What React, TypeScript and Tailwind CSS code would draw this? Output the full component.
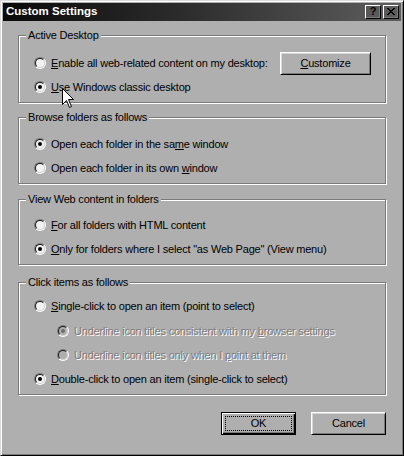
import type { FC, ReactNode } from 'react';

const BG = 'bg-[#afafaf]';

const Radio: FC<{ checked?: boolean; disabled?: boolean }> = ({ checked, disabled }) => (
  <div className="w-3 h-3 shrink-0 rounded-full border border-t-[#7a7a7a] border-l-[#7a7a7a] border-r-white border-b-white">
    <div
      className={`w-full h-full rounded-full border border-t-[#1a1a1a] border-l-[#1a1a1a] border-r-[#d8d8d8] border-b-[#d8d8d8] flex items-center justify-center ${
        disabled ? 'bg-[#afafaf]' : 'bg-[#f2f2f2]'
      }`}
    >
      {checked && <div className={`w-1 h-1 rounded-full ${disabled ? 'bg-[#6e6e6e]' : 'bg-black'}`} />}
    </div>
  </div>
);

const Key: FC<{ children: ReactNode }> = ({ children }) => (
  <span className="underline underline-offset-[1px] decoration-1">{children}</span>
);

const Option: FC<{ checked?: boolean; disabled?: boolean; children: ReactNode; className?: string }> = ({
  checked,
  disabled,
  children,
  className = 'h-6',
}) => (
  <div className={`flex items-center gap-[5px] ${className}`}>
    <Radio checked={checked} disabled={disabled} />
    <span
      className={
        disabled ? 'text-[#7c7c7c] [text-shadow:1px_1px_0_#ffffff] whitespace-nowrap' : 'text-black whitespace-nowrap'
      }
    >
      {children}
    </span>
  </div>
);

const Group: FC<{ title: string; className: string; children: ReactNode }> = ({ title, className, children }) => (
  <div className={`relative border border-[#7a7a7a] shadow-[1px_1px_0_#ffffff,inset_1px_1px_0_#ffffff] pl-[15px] ${className}`}>
    <div className={`absolute left-[7px] -top-[7px] px-[2px] leading-[13px] ${BG}`}>{title}</div>
    {children}
  </div>
);

const Button: FC<{ children: ReactNode; def?: boolean; className?: string }> = ({ children, def, className = '' }) =>
  def ? (
    <div className="relative w-[75px] h-[23px] border border-black shadow-[inset_1px_1px_0_#ffffff,inset_-1px_-1px_0_#000000,inset_-2px_-2px_0_#7a7a7a] flex items-center justify-center">
      <div className="absolute inset-[3px] border border-dotted border-black" />
      {children}
    </div>
  ) : (
    <div
      className={`h-[23px] border border-t-white border-l-white border-r-black border-b-black shadow-[inset_1px_1px_0_#d8d8d8,inset_-1px_-1px_0_#7a7a7a] flex items-center justify-center ${className}`}
    >
      {children}
    </div>
  );

const Cursor: FC = () => (
  <svg className="absolute left-[61px] top-[87px]" width="13" height="21" viewBox="0 0 13 21">
    <path
      d="M0.5 0.5 L0.5 16.5 L4.5 12.5 L7.5 19.5 L9.5 18.5 L6.5 11.5 L11.5 11.5 Z"
      fill="#ffffff"
      stroke="#000000"
      strokeWidth="1"
      strokeLinejoin="miter"
    />
  </svg>
);

export default function App() {
  return (
    <div
      className={`relative w-[404px] h-[456px] ${BG} border border-t-[#dcdcdc] border-l-[#dcdcdc] border-r-black border-b-black shadow-[inset_1px_1px_0_#ffffff,inset_-1px_-1px_0_#7a7a7a] p-[2px] font-['Liberation_Sans',Arial,sans-serif] text-[11px] text-black select-none`}
    >
      {/* Title bar */}
      <div className="h-[18px] flex items-center justify-between pl-[3px] pr-[2px] bg-[linear-gradient(to_right,#0a0a0a,#2c2c2c_45%,#5e5e5e)]">
        <span className="text-white font-bold text-[11.5px] leading-none">Custom Settings</span>
        <div className="flex gap-[2px]">
          <div className="w-4 h-[14px] border border-t-white border-l-white border-r-black border-b-black shadow-[inset_-1px_-1px_0_#7a7a7a] flex items-center justify-center font-bold text-[11px] leading-none pb-[1px]">
            ?
          </div>
          <div className="w-4 h-[14px] border border-t-white border-l-white border-r-black border-b-black shadow-[inset_-1px_-1px_0_#7a7a7a] flex items-center justify-center pb-[1px]">
            <svg width="8" height="7" viewBox="0 0 8 7">
              <path d="M0 0h2v1H0zM6 0h2v1H6zM1 1h2v1H1zM5 1h2v1H5zM2 2h4v1H2zM3 3h2v1H3zM2 4h4v1H2zM1 5h2v1H1zM5 5h2v1H5zM0 6h2v1H0zM6 6h2v1H6z" fill="#000" />
            </svg>
          </div>
        </div>
      </div>

      {/* Body */}
      <div className="px-[15px] pt-[14px] tracking-[-0.2px]">
        <Group title="Active Desktop" className="h-[68px] pt-[15px] pr-[14px]">
          <div className="flex items-center h-6">
            <Option>
              <Key>E</Key>nable all web-related content on my desktop:
            </Option>
            <Button className="ml-auto w-[91px]">
              <span>
                <Key>C</Key>ustomize
              </span>
            </Button>
          </div>
          <Option checked>
            <Key>U</Key>se Windows classic desktop
          </Option>
        </Group>

        <Group title="Browse folders as follows" className="mt-[14px] h-[67px] pt-[14px]">
          <Option checked>
            Open each folder in the sa<Key>m</Key>e window
          </Option>
          <Option>
            Open each folder in its own <Key>w</Key>indow
          </Option>
        </Group>

        <Group title="View Web content in folders" className="mt-[15px] h-[66px] pt-[13px]">
          <Option>
            <Key>F</Key>or all folders with HTML content
          </Option>
          <Option checked>
            <Key>O</Key>nly for folders where I select "as Web Page" (View menu)
          </Option>
        </Group>

        <Group title="Click items as follows" className="mt-[17px] h-[113px] pt-[10px]">
          <Option className="h-[26px]">
            <Key>S</Key>ingle-click to open an item (point to select)
          </Option>
          <div className="pl-[23px]">
            <Option checked disabled>
              Underline icon titles consistent with my <Key>b</Key>rowser settings
            </Option>
            <Option disabled>
              Underline icon titles only when I <Key>p</Key>oint at them
            </Option>
          </div>
          <Option checked>
            <Key>D</Key>ouble-click to open an item (single-click to select)
          </Option>
        </Group>

        <div className="flex justify-end gap-[15px] mt-[17px]">
          <Button def>OK</Button>
          <Button className="w-[75px]">Cancel</Button>
        </div>
      </div>

      <Cursor />
    </div>
  );
}
